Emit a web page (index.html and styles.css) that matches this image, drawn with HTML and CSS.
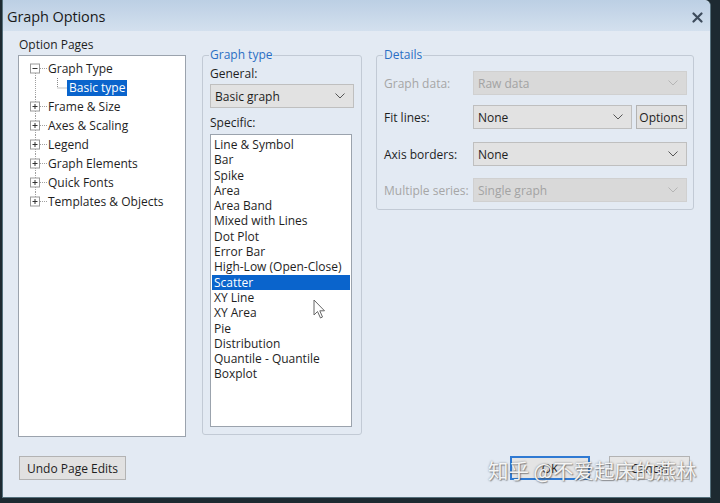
FILE: index.html
```html
<!DOCTYPE html>
<html>
<head>
<meta charset="utf-8">
<link rel="stylesheet" href="styles.css">
</head>
<body>
<div class="window">
  <div class="titlebar">
    <span class="title">Graph Options</span>
    <span class="close">
      <svg width="11" height="11" viewBox="0 0 11 11"><path d="M1.5 1.5 L9.5 9.5 M9.5 1.5 L1.5 9.5" stroke="#3d4b5c" stroke-width="2.2" stroke-linecap="round"/></svg>
    </span>
  </div>
  <div class="client">
    <div class="main">
      <div class="pages">
        <div class="caption">Option Pages</div>
        <div class="tree">
          <div class="trow">
            <svg class="gut" width="28" height="19" viewBox="0 0 28 19"><path d="M16.5 14 V19" stroke="#a0a0a0" stroke-dasharray="1 1"/><path d="M21 9.5 H28" stroke="#a0a0a0" stroke-dasharray="1 1"/><rect x="11.5" y="5" width="9" height="9" fill="#fff" stroke="#9a9a9a"/><path d="M13.5 9.5 H18.5" stroke="#333"/></svg>
            <span class="tlabel">Graph Type</span>
          </div>
          <div class="trow">
            <svg class="gut" width="48" height="19" viewBox="0 0 48 19"><path d="M16.5 0 V19" stroke="#a0a0a0" stroke-dasharray="1 1"/><path d="M38.5 0 V10 H48" stroke="#8a8a8a" stroke-dasharray="1 1" fill="none"/></svg>
            <span class="tlabel sel">Basic type</span>
          </div>
          <div class="trow">
            <svg class="gut" width="28" height="19" viewBox="0 0 28 19"><path d="M16.5 0 V19" stroke="#a0a0a0" stroke-dasharray="1 1"/><path d="M21 9.5 H28" stroke="#a0a0a0" stroke-dasharray="1 1"/><rect x="11.5" y="5" width="9" height="9" fill="#fff" stroke="#9a9a9a"/><path d="M13.5 9.5 H18.5 M16 7 V12" stroke="#333"/></svg>
            <span class="tlabel">Frame &amp; Size</span>
          </div>
          <div class="trow">
            <svg class="gut" width="28" height="19" viewBox="0 0 28 19"><path d="M16.5 0 V19" stroke="#a0a0a0" stroke-dasharray="1 1"/><path d="M21 9.5 H28" stroke="#a0a0a0" stroke-dasharray="1 1"/><rect x="11.5" y="5" width="9" height="9" fill="#fff" stroke="#9a9a9a"/><path d="M13.5 9.5 H18.5 M16 7 V12" stroke="#333"/></svg>
            <span class="tlabel">Axes &amp; Scaling</span>
          </div>
          <div class="trow">
            <svg class="gut" width="28" height="19" viewBox="0 0 28 19"><path d="M16.5 0 V19" stroke="#a0a0a0" stroke-dasharray="1 1"/><path d="M21 9.5 H28" stroke="#a0a0a0" stroke-dasharray="1 1"/><rect x="11.5" y="5" width="9" height="9" fill="#fff" stroke="#9a9a9a"/><path d="M13.5 9.5 H18.5 M16 7 V12" stroke="#333"/></svg>
            <span class="tlabel">Legend</span>
          </div>
          <div class="trow">
            <svg class="gut" width="28" height="19" viewBox="0 0 28 19"><path d="M16.5 0 V19" stroke="#a0a0a0" stroke-dasharray="1 1"/><path d="M21 9.5 H28" stroke="#a0a0a0" stroke-dasharray="1 1"/><rect x="11.5" y="5" width="9" height="9" fill="#fff" stroke="#9a9a9a"/><path d="M13.5 9.5 H18.5 M16 7 V12" stroke="#333"/></svg>
            <span class="tlabel">Graph Elements</span>
          </div>
          <div class="trow">
            <svg class="gut" width="28" height="19" viewBox="0 0 28 19"><path d="M16.5 0 V19" stroke="#a0a0a0" stroke-dasharray="1 1"/><path d="M21 9.5 H28" stroke="#a0a0a0" stroke-dasharray="1 1"/><rect x="11.5" y="5" width="9" height="9" fill="#fff" stroke="#9a9a9a"/><path d="M13.5 9.5 H18.5 M16 7 V12" stroke="#333"/></svg>
            <span class="tlabel">Quick Fonts</span>
          </div>
          <div class="trow">
            <svg class="gut" width="28" height="19" viewBox="0 0 28 19"><path d="M16.5 0 V5" stroke="#a0a0a0" stroke-dasharray="1 1"/><path d="M21 9.5 H28" stroke="#a0a0a0" stroke-dasharray="1 1"/><rect x="11.5" y="5" width="9" height="9" fill="#fff" stroke="#9a9a9a"/><path d="M13.5 9.5 H18.5 M16 7 V12" stroke="#333"/></svg>
            <span class="tlabel">Templates &amp; Objects</span>
          </div>
        </div>
      </div>

      <fieldset class="group gtype">
        <legend>Graph type</legend>
        <div class="flabel">General:</div>
        <div class="combo wide">
          <span>Basic graph</span>
          <svg class="chev" width="10" height="6" viewBox="0 0 10 6"><path d="M0.5 0.5 L5 5 L9.5 0.5" fill="none" stroke="#555" stroke-width="1"/></svg>
        </div>
        <div class="flabel spec">Specific:</div>
        <div class="listbox">
          <div class="li">Line &amp; Symbol</div>
          <div class="li">Bar</div>
          <div class="li">Spike</div>
          <div class="li">Area</div>
          <div class="li">Area Band</div>
          <div class="li">Mixed with Lines</div>
          <div class="li">Dot Plot</div>
          <div class="li">Error Bar</div>
          <div class="li">High-Low (Open-Close)</div>
          <div class="li sel">Scatter</div>
          <div class="li">XY Line</div>
          <div class="li">XY Area</div>
          <div class="li">Pie</div>
          <div class="li">Distribution</div>
          <div class="li">Quantile - Quantile</div>
          <div class="li">Boxplot</div>
        </div>
      </fieldset>

      <fieldset class="group details">
        <legend>Details</legend>
        <div class="drow r1">
          <span class="dlabel dis">Graph data:</span>
          <div class="combo disabled grow"><span>Raw data</span><svg class="chev" width="10" height="6" viewBox="0 0 10 6"><path d="M0.5 0.5 L5 5 L9.5 0.5" fill="none" stroke="#b5b5b5" stroke-width="1"/></svg></div>
        </div>
        <div class="drow r2">
          <span class="dlabel">Fit lines:</span>
          <div class="combo grow"><span>None</span><svg class="chev" width="10" height="6" viewBox="0 0 10 6"><path d="M0.5 0.5 L5 5 L9.5 0.5" fill="none" stroke="#555" stroke-width="1"/></svg></div>
          <button class="btn opt">Options</button>
        </div>
        <div class="drow r3">
          <span class="dlabel">Axis borders:</span>
          <div class="combo grow"><span>None</span><svg class="chev" width="10" height="6" viewBox="0 0 10 6"><path d="M0.5 0.5 L5 5 L9.5 0.5" fill="none" stroke="#555" stroke-width="1"/></svg></div>
        </div>
        <div class="drow r4">
          <span class="dlabel dis">Multiple series:</span>
          <div class="combo disabled grow"><span>Single graph</span><svg class="chev" width="10" height="6" viewBox="0 0 10 6"><path d="M0.5 0.5 L5 5 L9.5 0.5" fill="none" stroke="#b5b5b5" stroke-width="1"/></svg></div>
        </div>
      </fieldset>
    </div>

    <div class="footer">
      <button class="btn undo">Undo Page Edits</button>
      <div class="okcancel">
        <button class="btn ok">OK</button>
        <button class="btn cancel">Cancel</button>
      </div>
    </div>
  </div>
  <div class="watermark">知乎 @不爱起床的燕林</div>
  <svg class="cursor" width="14" height="21" viewBox="0 0 14 21"><path d="M1 1 V16 L4.5 12.5 L7.5 19 L9.5 18 L6.8 11.8 L11.5 11.8 Z" fill="#fff" stroke="#666" stroke-width="1" stroke-linejoin="round"/></svg>
</div>
</body>
</html>
```

FILE: styles.css
```css
* { box-sizing: border-box; }
html, body { margin: 0; padding: 0; }
body {
  background: #1d2a31;
  width: 720px;
  height: 503px;
  overflow: hidden;
  font-family: "Open Sans", "Noto Sans", sans-serif;
  font-size: 12px;
  color: #1e1e1e;
}
.window {
  position: relative;
  margin-left: 2px;
  width: 709px;
  height: 498px;
  background: #e3eaf3;
  border: 1px solid #55707c;
  border-top: none;
  border-radius: 0 6px 0 0;
  display: flex;
  flex-direction: column;
}
.titlebar {
  height: 31px;
  flex: none;
  background: linear-gradient(#bccfe4, #d3e0ee);
  display: flex;
  align-items: center;
  justify-content: space-between;
  padding: 2px 7px 0 4px;
  border-radius: 0 6px 0 0;
}
.title {
  font-size: 14.5px;
  color: #1a1a1a;
  letter-spacing: -0.1px;
}
.close { display: flex; margin-top: 1px; }
.client {
  flex: 1;
  display: flex;
  flex-direction: column;
  padding: 6px 16px 0 15px;
}
.main {
  display: flex;
  align-items: flex-start;
}
.pages { width: 168px; flex: none; }
.caption { line-height: 15px; height: 15px; margin-left: 1px; margin-bottom: 3px; }
.tree {
  height: 382px;
  background: #fff;
  border: 1px solid #9ba3ad;
  padding-top: 3px;
}
.trow {
  display: flex;
  align-items: center;
  height: 19px;
}
.gut { flex: none; display: block; }
.tlabel { line-height: 16px; padding: 0 1px; }
.tlabel.sel {
  background: #0a64cc;
  color: #fff;
  padding: 0 2px;
}
.group {
  margin: 0;
  border: 1px solid #c2cad5;
  border-radius: 3px;
  padding: 0 7px 8px 7px;
}
.group legend {
  color: #2a6fc4;
  padding: 0 1px;
  line-height: 16px;
  margin-left: -1px;
}
.gtype {
  width: 160px;
  margin-left: 16px;
  margin-top: 10px;
  height: 388px;
}
.flabel { line-height: 16px; margin-top: 3px; }
.flabel.spec { margin-top: 7px; }
.combo {
  height: 24px;
  background: #e2e2e2;
  border: 1px solid #bfbfbf;
  display: flex;
  align-items: center;
  justify-content: space-between;
  padding: 0 8px 0 4px;
}
.combo.wide { width: 144px; margin-top: 2px; }
.combo.disabled { background: #d9d9d9; color: #a3a3a3; border-color: #d0d0d0; }
.listbox {
  margin-top: 3px;
  width: 142px;
  height: 293px;
  background: #fff;
  border: 1px solid #9ba3ad;
  padding: 2px 1px;
}
.li {
  line-height: 15.3px;
  height: 15.3px;
  padding-left: 2px;
  white-space: nowrap;
}
.li.sel { background: #0a64cc; color: #fff; }
.details {
  width: 318px;
  margin-left: 14px;
  margin-top: 10px;
  padding: 0 6px 7px 7px;
}
.drow {
  display: flex;
  align-items: center;
  height: 24px;
}
.drow.r1 { margin-top: 8px; }
.drow.r2 { margin-top: 10px; }
.drow.r3 { margin-top: 13px; }
.drow.r4 { margin-top: 12px; }
.dlabel { width: 89px; flex: none; }
.dlabel.dis { color: #a6a6a6; }
.grow { flex: 1; }
.btn {
  font-family: inherit;
  font-size: 12px;
  color: #1e1e1e;
  background: #e1e1e1;
  border: 1px solid #b3b3b3;
  height: 24px;
  padding: 0;
  margin: 0;
}
.opt { width: 51px; margin-left: 4px; }
.footer {
  margin-top: 19px;
  display: flex;
  justify-content: space-between;
  align-items: center;
  padding-right: 4px;
}
.undo { width: 107px; margin-left: 1px; }
.okcancel { display: flex; gap: 19px; }
.ok {
  width: 80px;
  border: 2px solid #2f7ad3;
  background: #e4e4e4;
}
.cancel { width: 81px; background: #e6e6e6; }
.watermark {
  position: absolute;
  left: 485px;
  top: 456px;
  font-family: "Noto Sans CJK SC", sans-serif;
  font-size: 20.5px;
  line-height: 28px;
  color: rgba(255, 255, 255, 0.92);
  text-shadow: 0 0 2px rgba(60, 60, 60, 0.6), 1px 1px 1px rgba(80, 80, 80, 0.5);
  white-space: nowrap;
}
.cursor {
  position: absolute;
  left: 310px;
  top: 299px;
}
```
